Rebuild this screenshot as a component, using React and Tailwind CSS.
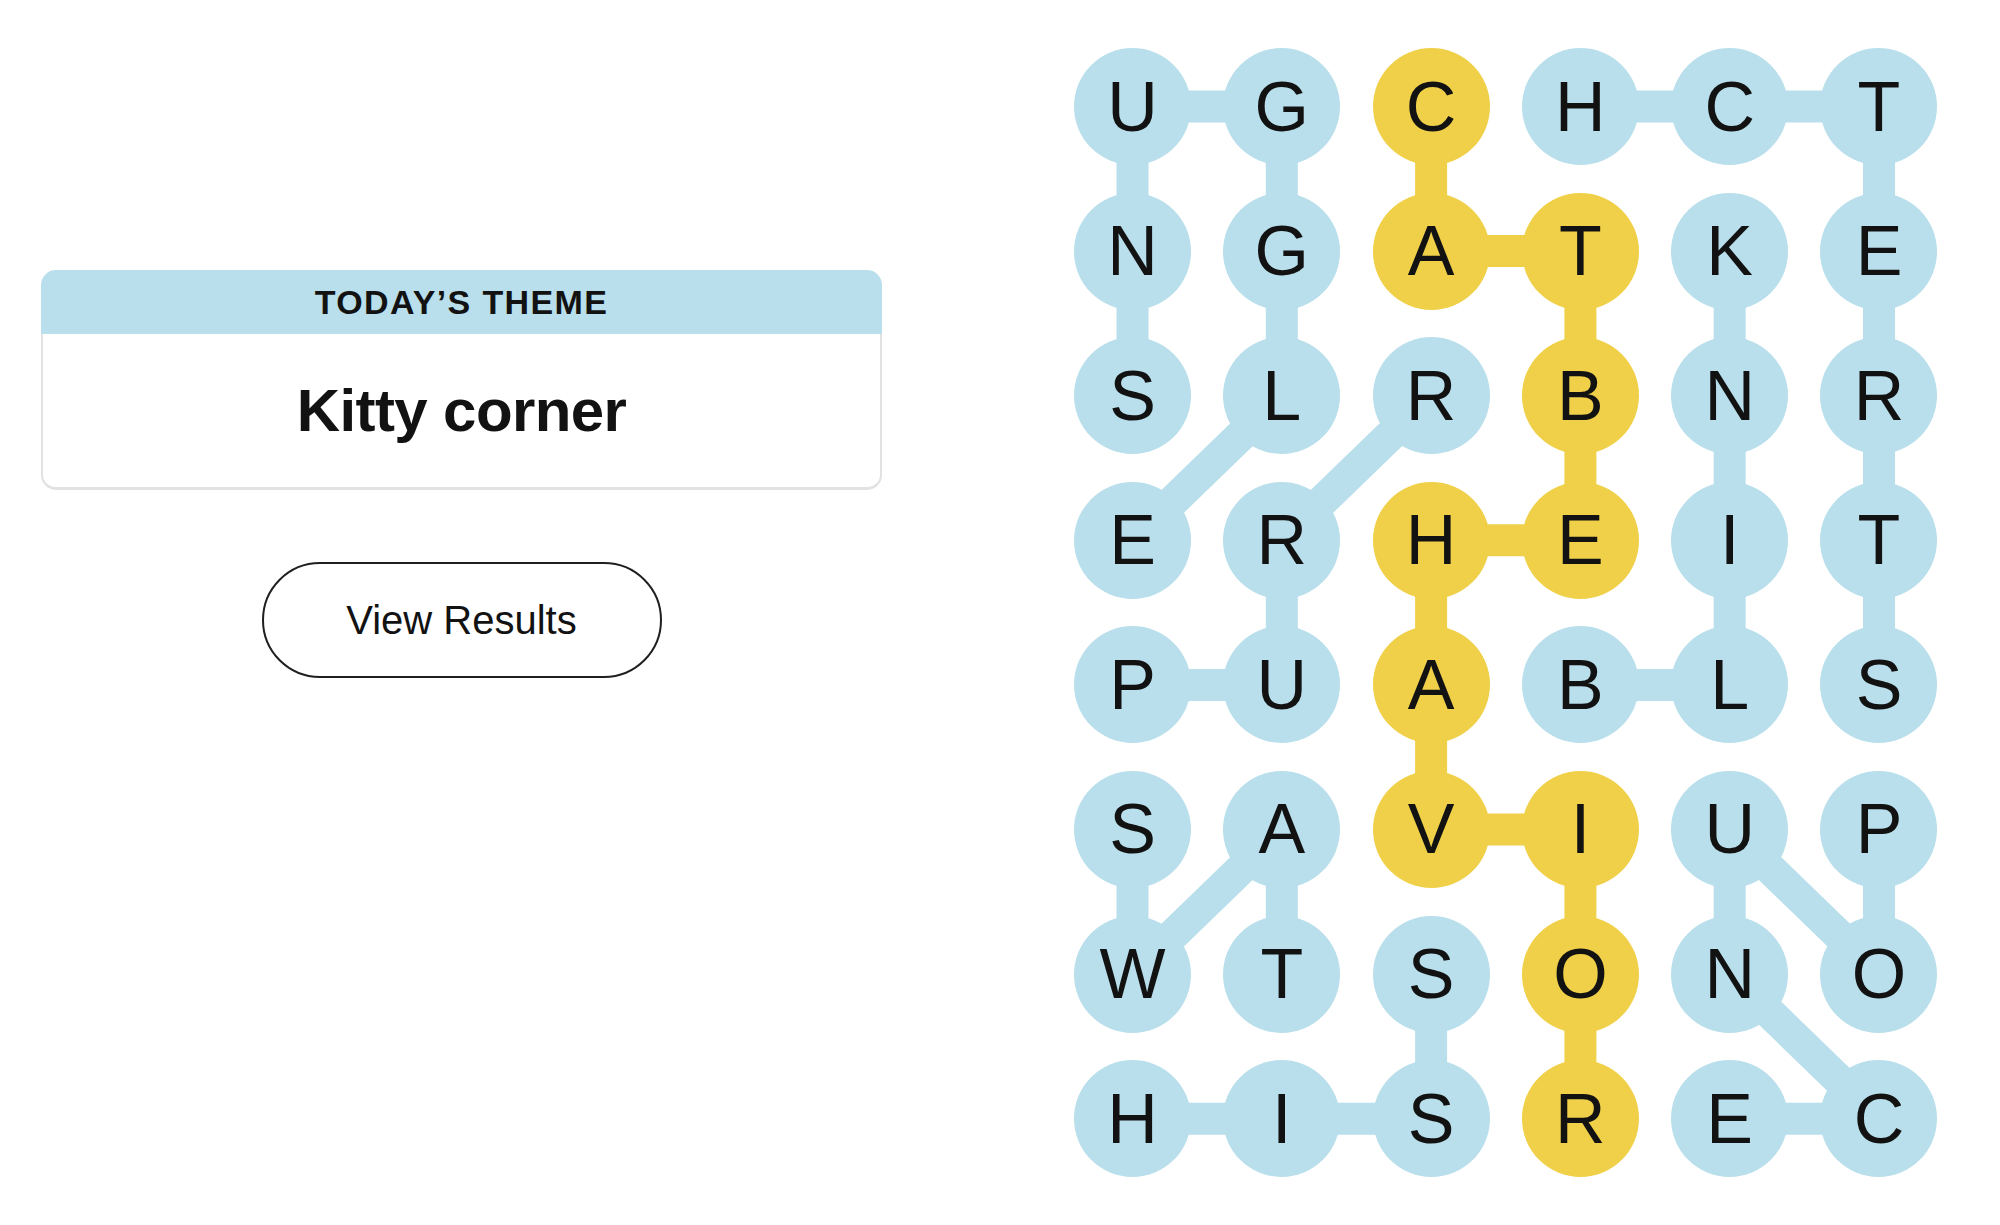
const BLUE = "#b8dfeb";
const YELLOW = "#f0d048";

const ROWS = [
  "UGCHCT",
  "NGATKE",
  "SLRBNR",
  "ERHEIT",
  "PUABLS",
  "SAVIUP",
  "WTSONO",
  "HISREC",
];

// cells on the spangram path
const SPANGRAM = [
  [0, 2], [1, 2], [1, 3], [2, 3], [3, 3], [3, 2], [4, 2], [5, 2], [5, 3], [6, 3], [7, 3],
];

const WORD_LINKS = [
  // SNUGGLE
  [[2, 0], [1, 0]], [[1, 0], [0, 0]], [[0, 0], [0, 1]], [[0, 1], [1, 1]], [[1, 1], [2, 1]], [[2, 1], [3, 0]],
  // PURR
  [[4, 0], [4, 1]], [[4, 1], [3, 1]], [[3, 1], [2, 2]],
  // STRETCH
  [[4, 5], [3, 5]], [[3, 5], [2, 5]], [[2, 5], [1, 5]], [[1, 5], [0, 5]], [[0, 5], [0, 4]], [[0, 4], [0, 3]],
  // BLINK
  [[4, 3], [4, 4]], [[4, 4], [3, 4]], [[3, 4], [2, 4]], [[2, 4], [1, 4]],
  // SWAT
  [[5, 0], [6, 0]], [[6, 0], [5, 1]], [[5, 1], [6, 1]],
  // HISS
  [[7, 0], [7, 1]], [[7, 1], [7, 2]], [[7, 2], [6, 2]],
  // POUNCE
  [[5, 5], [6, 5]], [[6, 5], [5, 4]], [[5, 4], [6, 4]], [[6, 4], [7, 5]], [[7, 5], [7, 4]],
];

const CELL = 117;
const STEP_X = 149.3;
const STEP_Y = 144.6;
const W = CELL + STEP_X * 5;
const H = CELL + STEP_Y * 7;

const cx = (c) => CELL / 2 + c * STEP_X;
const cy = (r) => CELL / 2 + r * STEP_Y;

const isSpangram = (r, c) => SPANGRAM.some(([a, b]) => a === r && b === c);

function Board() {
  const spanLinks = SPANGRAM.slice(1).map((p, i) => [SPANGRAM[i], p]);
  return (
    <div className="relative" style={{ width: W, height: H }}>
      <svg className="absolute inset-0" width={W} height={H} viewBox={`0 0 ${W} ${H}`}>
        {WORD_LINKS.map(([a, b], i) => (
          <line key={"w" + i} x1={cx(a[1])} y1={cy(a[0])} x2={cx(b[1])} y2={cy(b[0])} stroke={BLUE} strokeWidth="32" />
        ))}
        {spanLinks.map(([a, b], i) => (
          <line key={"s" + i} x1={cx(a[1])} y1={cy(a[0])} x2={cx(b[1])} y2={cy(b[0])} stroke={YELLOW} strokeWidth="32" />
        ))}
      </svg>
      <div className="relative grid grid-cols-[repeat(6,117px)] grid-rows-[repeat(8,117px)] gap-x-[32.3px] gap-y-[27.6px]">
        {ROWS.map((row, r) =>
          row.split("").map((ch, c) => (
            <div
              key={r + "-" + c}
              className={
                "w-[117px] h-[117px] rounded-full flex items-center justify-center text-[70px] leading-none text-[#121212] " +
                (isSpangram(r, c) ? "bg-[#f0d048]" : "bg-[#b8dfeb]")
              }
            >
              {ch}
            </div>
          ))
        )}
      </div>
    </div>
  );
}

export default function App() {
  return (
    <div className="min-h-screen w-full bg-white flex items-start font-['Liberation_Sans',Arial,sans-serif] text-[#121212]">
      <div className="ml-[41px] mt-[270px] w-[841px] flex flex-col items-center">
        <div className="w-full">
          <div className="h-[64px] rounded-t-[15px] bg-[#b8dfeb] flex items-center justify-center text-[34px] font-bold tracking-[0.04em]">
            TODAY’S THEME
          </div>
          <div className="h-[156px] rounded-b-[15px] border-x-2 border-b-[3px] border-[#e2e2e2] flex items-center justify-center text-[60px] font-bold tracking-[-0.01em]">
            Kitty corner
          </div>
        </div>
        <button className="mt-[72px] w-[400px] h-[116px] rounded-full border-2 border-[#1f1f1f] bg-white text-[40px] text-[#121212]">
          View Results
        </button>
      </div>
      <div className="ml-[192px] mt-[48px]">
        <Board />
      </div>
    </div>
  );
}
